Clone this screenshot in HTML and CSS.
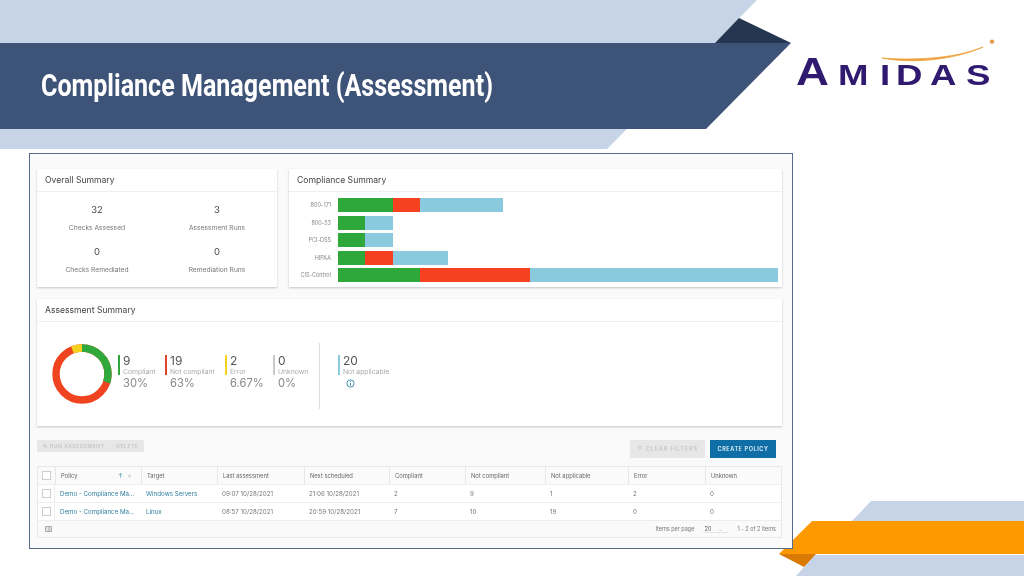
FILE: index.html
```html
<!DOCTYPE html>
<html>
	<head>
		<meta charset="UTF-8" />
		<title>Compliance Management (Assessment)</title>
		<link rel="stylesheet" href="styles.css">
	</head>
	<body>
		<div class="slide">
			<svg class="deco" width="1024" height="576" viewBox="0 0 1024 576">
				<polygon fill="#c7d4e7" points="0,0 757,0 715,43 0,43" />
				<polygon fill="#c7d4e7" points="0,129 627,129 607,149 0,149" />
				<polygon fill="#263650" points="715,43 739,18 791,43" />
				<polygon fill="#3e5378" points="0,43 791,43 706,129 0,129" />
				<polygon fill="#c7d4e7" points="871,501 1024,501 1024,521 852,521" />
				<polygon fill="#c7d4e7" points="815,555 1024,555 1024,576 796,576" />
				<polygon fill="#d97a05" points="779,554 816,554 804,567" />
				<polygon fill="#ff9900" points="812,521 1024,521 1024,554 779,554" />
			</svg>

			<header class="head">
				<h1 class="title">Compliance Management (Assessment)</h1>
				<div class="logo">
					<span class="big">A</span><span>M</span><span>I</span><span>D</span><span>A</span><span>S</span>
					<svg class="swoosh" width="115" height="24" viewBox="0 0 115 24">
						<path d="M0 19 C 25 21, 70 21, 101 8 C 72 21, 30 25, 0 19 Z" fill="#eda13c" stroke="#eda13c" stroke-width="0.8" />
						<circle cx="110" cy="2.6" r="2.2" fill="#e69a45" />
					</svg>
				</div>
			</header>

			<div class="frame">
				<div class="top-row">
					<section class="card">
						<h2 class="card-title">Overall Summary</h2>
						<div class="counts">
							<div class="count"><b>32</b><span>Checks Assessed</span></div>
							<div class="count"><b>3</b><span>Assessment Runs</span></div>
							<div class="count"><b>0</b><span>Checks Remediated</span></div>
							<div class="count"><b>0</b><span>Remediation Runs</span></div>
						</div>
					</section>
					<section class="card">
						<h2 class="card-title">Compliance Summary</h2>
						<div class="bars">
							<div class="bar-row"><span class="bar-name">800-171</span>
								<i class="green" style="width:55px"></i><i class="red" style="width:27px"></i><i class="blue" style="width:83px"></i></div>
							<div class="bar-row"><span class="bar-name">800-53</span>
								<i class="green" style="width:27px"></i><i class="blue" style="width:28px"></i></div>
							<div class="bar-row"><span class="bar-name">PCI-DSS</span>
								<i class="green" style="width:27px"></i><i class="blue" style="width:28px"></i></div>
							<div class="bar-row"><span class="bar-name">HIPAA</span>
								<i class="green" style="width:27px"></i><i class="red" style="width:28px"></i><i class="blue" style="width:55px"></i></div>
							<div class="bar-row"><span class="bar-name">CIS-Control</span>
								<i class="green" style="width:82px"></i><i class="red" style="width:110px"></i><i class="blue" style="width:248px"></i></div>
						</div>
					</section>
				</div>

				<section class="card assess">
					<h2 class="card-title">Assessment Summary</h2>
					<div class="assess-body">
						<svg class="donut" width="60" height="60" viewBox="0 0 60 60">
							<g fill="none" stroke-width="7.4" transform="rotate(-90 30 30)">
								<circle cx="30" cy="30" r="26" stroke="#f0431f" />
								<circle cx="30" cy="30" r="26" stroke="#2fa93c" stroke-dasharray="49 114.4" />
								<circle cx="30" cy="30" r="26" stroke="#f4d21f" stroke-dasharray="10.9 152.5" stroke-dashoffset="10.9" />
							</g>
						</svg>
						<div class="legend">
							<div class="stat s-green w47"><b>9</b><span>Compliant</span><em>30%</em></div>
							<div class="stat s-red w60"><b>19</b><span>Not compliant</span><em>63%</em></div>
							<div class="stat s-yellow w48"><b>2</b><span>Error</span><em>6.67%</em></div>
							<div class="stat s-grey w46"><b>0</b><span>Unknown</span><em>0%</em></div>
						</div>
						<div class="split"></div>
						<div class="stat s-blue"><b>20</b><span>Not applicable</span>
							<svg class="info" width="9" height="9" viewBox="0 0 9 9">
								<circle cx="4.5" cy="4.5" r="3.6" fill="none" stroke="#2d86ad" stroke-width="0.9" />
								<path d="M4.5 3.8V6.6M4.5 2.2V3" stroke="#2d86ad" stroke-width="1" />
							</svg>
						</div>
					</div>
				</section>

				<div class="toolbar">
					<div class="group">
						<button class="btn-off small">✎ RUN ASSESSMENT</button>
						<button class="btn-off small">DELETE</button>
					</div>
					<div class="group right">
						<button class="btn-off">▽ CLEAR FILTERS</button>
						<button class="btn-main">CREATE POLICY</button>
					</div>
				</div>

				<div class="grid">
					<div class="grid-row grid-head">
						<div class="c-check"><span class="box"></span></div>
						<div class="c-policy">Policy <span class="sort">↑</span><span class="funnel">▿</span></div>
						<div>Target</div>
						<div>Last assessment</div>
						<div>Next scheduled</div>
						<div>Compliant</div>
						<div>Not compliant</div>
						<div>Not applicable</div>
						<div>Error</div>
						<div>Unknown</div>
					</div>
					<div class="grid-row">
						<div class="c-check"><span class="box"></span></div>
						<div class="link">Demo - Compliance Ma...</div>
						<div class="link">Windows Servers</div>
						<div>09:07 10/28/2021</div>
						<div>21:06 10/28/2021</div>
						<div>2</div>
						<div>9</div>
						<div>1</div>
						<div>2</div>
						<div>0</div>
					</div>
					<div class="grid-row">
						<div class="c-check"><span class="box"></span></div>
						<div class="link">Demo - Compliance Ma...</div>
						<div class="link">Linux</div>
						<div>08:57 10/28/2021</div>
						<div>20:59 10/28/2021</div>
						<div>7</div>
						<div>10</div>
						<div>19</div>
						<div>0</div>
						<div>0</div>
					</div>
					<div class="grid-foot">
						<svg width="7" height="6" viewBox="0 0 7 6"><path d="M.5.5h6v5h-6zM4 .5v5" fill="#e4e4e4" stroke="#999" stroke-width="0.8" /></svg>
						<div class="pager">
							<span>Items per page</span>
							<span class="per-page">20 <small>⌄</small></span>
							<span>1 - 2 of 2 items</span>
						</div>
					</div>
				</div>
			</div>
		</div>
	</body>
</html>
```

FILE: styles.css
```css
html, body { margin: 0; background: #fff; }
body { font-family: Inter, "Open Sans", sans-serif; color: #666; }
.slide { width: 1024px; height: 576px; position: relative; overflow: hidden; }
.deco { position: absolute; left: 0; top: 0; }

.head { position: relative; height: 153px; box-sizing: border-box; display: flex; justify-content: space-between; padding: 69px 34px 0 41px; }
.title { margin: 0; color: #fff; font: 700 30.5px/34px Roboto, sans-serif; white-space: nowrap; transform: scaleX(.822); transform-origin: left center; }

.logo { position: relative; display: grid; grid-template-columns: 42px 42px 16px 34px 36px 24px; align-items: end; width: 194px; height: 27px; margin-top: -10px; color: #301a70; font: 700 30px/22px "Liberation Sans", sans-serif; }
.logo span { display: block; transform: scaleX(1.22); transform-origin: left bottom; }
.logo .big { font-size: 38px; line-height: 27px; transform: scaleX(1.2); }
.swoosh { position: absolute; left: 86px; top: -20px; }

.frame { position: relative; width: 764px; height: 396px; box-sizing: border-box; margin-left: 29px; padding: 15px 10px 0 7px; background: #fafafa; border: 1px solid #566a8b; filter: blur(.35px); }
.top-row { display: grid; grid-template-columns: 240px 493px; gap: 12px; margin-bottom: 12px; }
.card { background: #fff; height: 118px; box-sizing: border-box; box-shadow: 0 1px 2px #c4c4c4; }
.card-title { margin: 0; height: 23px; box-sizing: border-box; padding: 0 8px; font: 400 8.6px/23px Inter, sans-serif; color: #444; border-bottom: 1px solid #efefef; }

.counts { display: grid; grid-template-columns: 120px 120px; grid-auto-rows: 41.5px; padding-top: 12px; }
.count { display: flex; flex-direction: column; align-items: center; gap: 7px; }
.count b { font-weight: 400; font-size: 9.5px; line-height: 12px; color: #444; }
.count span { font-size: 6.7px; line-height: 10px; color: #777; }

.bars { display: flex; flex-direction: column; gap: 3.5px; padding-top: 6px; }
.bar-row { display: flex; height: 14px; }
.bar-name { width: 42px; margin-right: 7px; text-align: right; font-size: 5.5px; line-height: 14px; color: #888; white-space: nowrap; }
.bar-row i { display: block; height: 14px; }
.green { background: #2ea83b; }
.red { background: #f5411f; }
.blue { background: #8acade; }

.assess { height: 127px; }
.assess-body { display: flex; align-items: flex-start; padding: 21px 0 0 15px; }
.donut { margin: 1px 6px 0 0; }
.legend { display: flex; margin-top: 12px; }
.stat { display: flex; flex-direction: column; box-sizing: border-box; height: 20px; padding-left: 3px; border-left: 2px solid #ccc; color: #888; }
.stat > * { flex: none; }
.w47 { width: 47px; }
.w60 { width: 60px; }
.w48 { width: 48px; }
.w46 { width: 46px; }
.stat b { font-weight: 400; font-size: 12px; line-height: 12px; color: #555; }
.stat span { font-size: 6.8px; line-height: 9px; color: #aaa; white-space: nowrap; }
.stat em { font-style: normal; font-size: 11.2px; line-height: 15px; color: #888; }
.s-green { border-color: #2ea83b; }
.s-red { border-color: #e0432a; }
.s-yellow { border-color: #f4d21f; }
.s-grey { border-color: #c8c8c8; }
.s-blue { border-color: #8acade; margin-top: 12px; }
.split { width: 1px; height: 66px; background: #ddd; margin: 0 18px 0 0; }
.info { margin: 3px 0 0 3px; }

.toolbar { display: flex; justify-content: space-between; align-items: flex-start; margin-top: 14px; padding-right: 6px; height: 26px; }
.group { display: flex; }
.group.right { gap: 5px; }
button { border: 0; padding: 0; font-family: Inter, sans-serif; font-weight: 600; letter-spacing: .6px; }
.btn-off { background: #e7e7e7; color: #c6c6c6; height: 18px; width: 75px; font-size: 5.5px; letter-spacing: .85px; }
.btn-off.small { height: 12px; width: 74px; font-size: 5px; letter-spacing: .6px; }
.btn-off.small + .btn-off.small { width: 33px; }
.btn-main { background: #0f6ea6; color: #e8f2f8; height: 18px; width: 66px; font-size: 5.5px; }

.grid { border: 1px solid #e8e8e8; background: #fff; font-size: 6.2px; color: #777; }
.grid-row { display: grid; grid-template-columns: 17px 86px 76px 87px 85px 76px 80px 83px 77px 1fr; height: 18px; border-bottom: 1px solid #eee; box-sizing: border-box; line-height: 17px; }
.grid-row > div { padding-left: 5px; white-space: nowrap; }
.grid-head { background: #fafafa; color: #666; font-size: 5.8px; }
.grid-head > div { border-left: 1px solid #e6e6e6; }
.grid-head > div:first-child { border-left: 0; }
.grid-row .c-check { padding: 0; display: flex; align-items: center; justify-content: center; border-right: 1px solid #eee; }
.grid-head .c-check { border-right: 0; }
.box { width: 7px; height: 7px; border: 1px solid #ccc; background: #fff; }
.c-policy { position: relative; }
.sort { position: absolute; left: 62px; color: #2d86ad; }
.funnel { position: absolute; left: 72px; color: #999; }
.link { color: #2f7f9f; }
.grid-foot { display: flex; justify-content: space-between; align-items: center; height: 16px; padding: 0 5px 0 7px; background: #fafafa; font-size: 5.5px; color: #777; }
.pager { display: flex; align-items: center; gap: 9px; }
.per-page { width: 24px; border-bottom: 1px solid #e4e4e4; padding-left: 1px; color: #555; }
.per-page small { color: #bbb; margin-left: 6px; }
```
